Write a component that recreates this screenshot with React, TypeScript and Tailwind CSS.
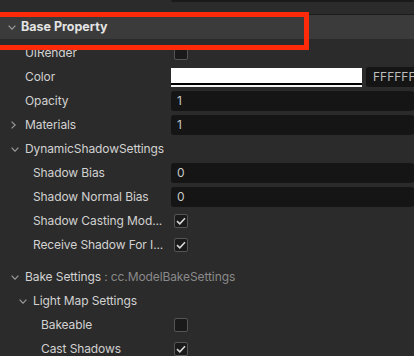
import type { ReactNode } from "react";

const FONT = { fontFamily: "Inter, 'Liberation Sans', sans-serif" };

function Chevron({ open }: { open: boolean }) {
  return open ? (
    <svg width="8" height="5" viewBox="0 0 8 5" className="block">
      <polyline points="0.6,0.6 4,4.2 7.4,0.6" fill="none" stroke="#9a9a9a" strokeWidth="1.2" />
    </svg>
  ) : (
    <svg width="5" height="8" viewBox="0 0 5 8" className="block">
      <polyline points="0.6,0.6 4.2,4 0.6,7.4" fill="none" stroke="#9a9a9a" strokeWidth="1.2" />
    </svg>
  );
}

function Check({ checked }: { checked?: boolean }) {
  return (
    <div className="ml-[3px] flex h-[14px] w-[14px] items-center justify-center rounded-[2px] border border-[#555] bg-[#1a1a1a]">
      {checked && (
        <svg width="10" height="8" viewBox="0 0 10 8">
          <polyline points="1,4.2 3.8,6.8 9,1.2" fill="none" stroke="#d8d8d8" strokeWidth="1.6" />
        </svg>
      )}
    </div>
  );
}

function NumInput({ value }: { value: string }) {
  return (
    <div className="flex h-[20px] w-full items-center rounded-[3px] bg-[#151515] pl-[6px] text-[12px] text-[#c8c8c8]">
      {value}
    </div>
  );
}

function Row({
  level,
  chevron,
  label,
  children,
}: {
  level: number;
  chevron?: "open" | "closed";
  label: string;
  children?: ReactNode;
}) {
  const pad = ["pl-[11px]", "pl-[19px]", "pl-[27px]"][level];
  return (
    <div className="flex h-[24px] items-center">
      <div className={`flex w-[171px] shrink-0 items-center ${pad}`}>
        <div className="flex w-[14px] shrink-0 items-center">
          {chevron && <Chevron open={chevron === "open"} />}
        </div>
        <span className="whitespace-nowrap text-[12px] tracking-[-0.1px] text-[#d2d2d2]">{label}</span>
      </div>
      <div className="flex min-w-0 flex-1 items-center">{children}</div>
    </div>
  );
}

export default function App() {
  return (
    <div className="relative h-[356px] w-[414px] overflow-hidden bg-[#2b2b2b]" style={FONT}>
      {/* tail of the previous field */}
      <div className="h-[14px]">
        <div className="ml-[171px] h-[2px] rounded-b-[3px] bg-[#1a1a1a]" />
      </div>

      {/* section header */}
      <div className="flex h-[25px] items-center border-t border-[#1c1c1c] bg-[#3b3b3b] pl-[8px]">
        <div className="flex w-[13px] shrink-0 items-center">
          <Chevron open />
        </div>
        <span className="text-[12.5px] font-bold text-[#e4e4e4]">Base Property</span>
      </div>

      <div className="pt-[2px]">
        <Row level={0} label="UIRender">
          <Check />
        </Row>
        <Row level={0} label="Color">
          <div className="flex w-[300px] shrink-0 items-center gap-[4px]">
            <div className="flex h-[19px] w-[191px] shrink-0 flex-col">
              <div className="h-[15px] bg-white" />
              <div className="h-[2px] bg-black" />
              <div className="h-[2px] bg-[#f4f4f4]" />
            </div>
            <div className="flex h-[20px] w-[80px] shrink-0 items-center rounded-[3px] bg-[#151515] pl-[7px] text-[12px] text-[#bdbdbd]">
              FFFFFF
            </div>
          </div>
        </Row>
        <Row level={0} label="Opacity">
          <NumInput value="1" />
        </Row>
        <Row level={0} chevron="closed" label="Materials">
          <NumInput value="1" />
        </Row>
        <Row level={0} chevron="open" label="DynamicShadowSettings" />
        <Row level={1} label="Shadow Bias">
          <NumInput value="0" />
        </Row>
        <Row level={1} label="Shadow Normal Bias">
          <NumInput value="0" />
        </Row>
        <Row level={1} label="Shadow Casting Mod...">
          <Check checked />
        </Row>
        <Row level={1} label="Receive Shadow For I...">
          <Check checked />
        </Row>

        {/* bake settings */}
        <div className="mt-[8px] flex h-[24px] items-center whitespace-nowrap pl-[11px] text-[12px] tracking-[-0.1px]">
          <div className="flex w-[14px] shrink-0 items-center">
            <Chevron open />
          </div>
          <span className="text-[#d2d2d2]">Bake Settings</span>
          <span className="text-[#8a8a8a]">&nbsp;: cc.ModelBakeSettings</span>
        </div>
        <Row level={1} chevron="open" label="Light Map Settings" />
        <Row level={2} label="Bakeable">
          <Check />
        </Row>
        <Row level={2} label="Cast Shadows">
          <Check checked />
        </Row>
      </div>

      {/* highlight box */}
      <div className="pointer-events-none absolute left-[-10px] top-[12px] h-[38px] w-[319px] border-[5px] border-[#ff2a0a]" />
    </div>
  );
}
